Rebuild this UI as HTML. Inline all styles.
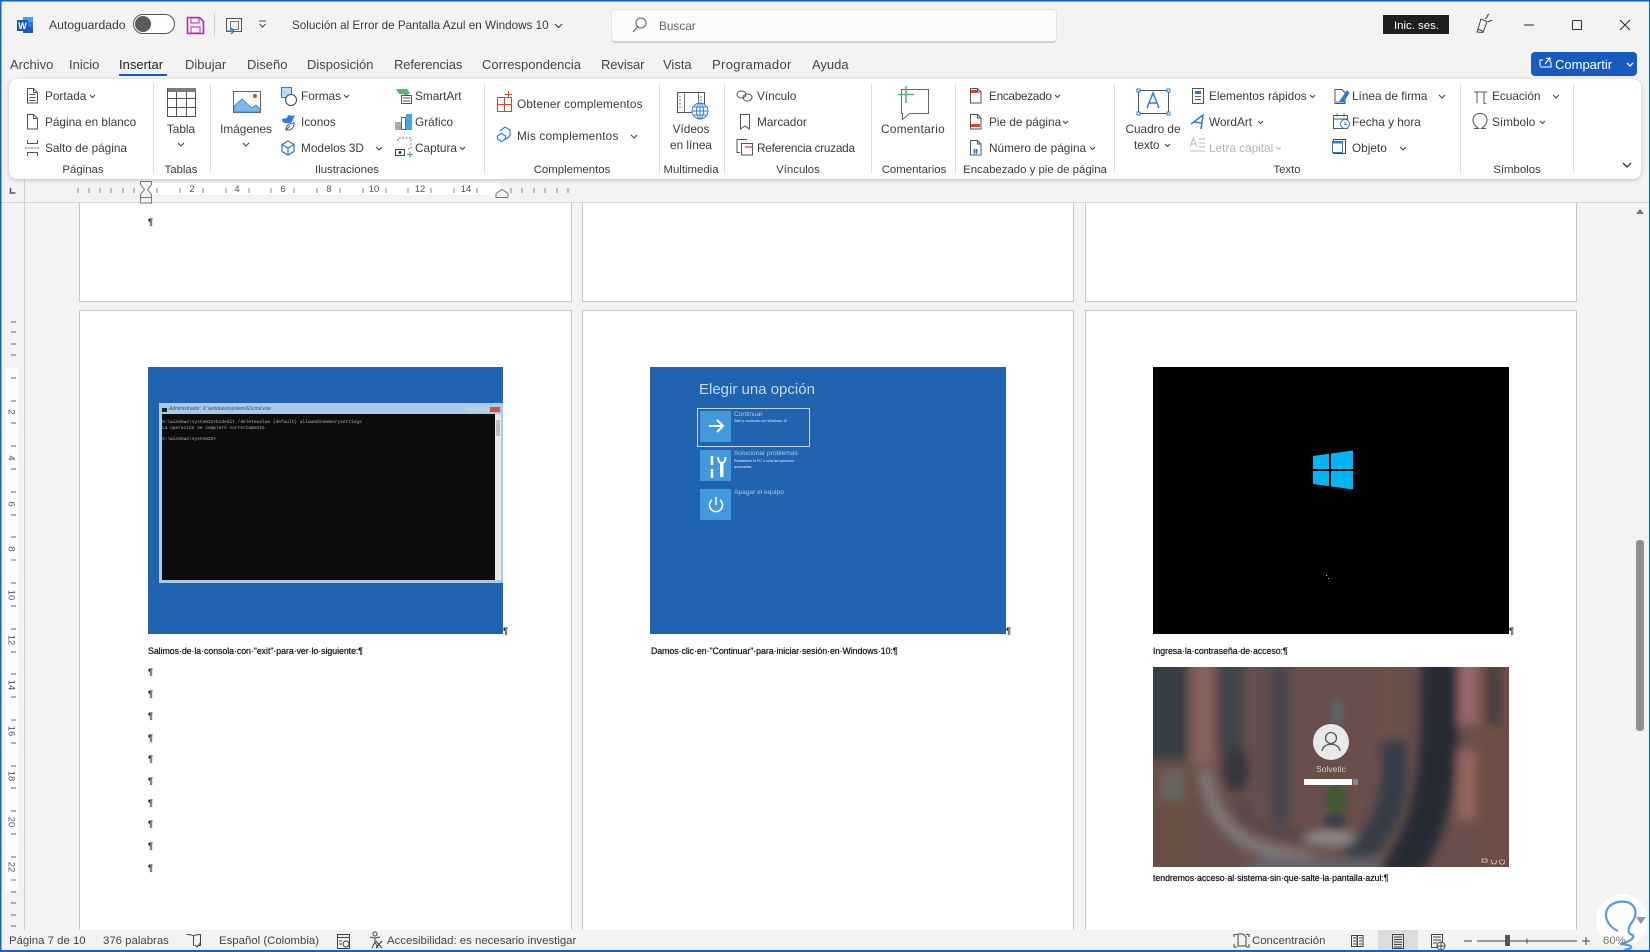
<!DOCTYPE html>
<html lang="es"><head><meta charset="utf-8"><title>Word</title>
<style>
html,body{margin:0;padding:0;width:1650px;height:952px;overflow:hidden;background:#f3f3f3;font-family:"Liberation Sans",sans-serif;color:#333}
.a{position:absolute}
.t{position:absolute;white-space:nowrap;font-size:11.8px;line-height:16px;color:#3b3b3b}
.c{transform:translateX(-50%)}
.tab{position:absolute;top:57px;font-size:13px;line-height:16px;color:#444;white-space:nowrap}
.sb{position:absolute;top:933px;font-size:11.4px;line-height:16px;color:#444;white-space:nowrap}
.page{position:absolute;background:#fff;border:1px solid #c6c6c6;box-sizing:border-box}
.cap{position:absolute;font-size:8.8px;line-height:12px;color:#111;white-space:nowrap;text-shadow:0 0 .6px #333}
.p{position:absolute;left:148px;font-size:9px;font-weight:bold;line-height:10px;color:#222}
.r{position:absolute;font-size:9.5px;line-height:12px;color:#555}
.sep{position:absolute;top:84px;width:1px;height:89px;background:#dcdcdc}
svg{position:absolute;left:0;top:0}
</style></head><body>

<!-- doc area -->
<div class="a" style="left:0;top:203px;width:1650px;height:727px;background:#f3f3f3"></div>
<div class="a" style="left:24px;top:179px;width:1px;height:751px;background:#cfcfcf"></div>
<div class="a" style="left:0;top:202px;width:1650px;height:1px;background:#d6d6d6"></div>
<div class="a" style="left:5px;top:368px;width:13px;height:522px;background:#fff"></div>

<div class="page" style="left:79px;top:203px;width:493px;height:99px;border-top:0"></div>
<div class="page" style="left:582px;top:203px;width:492px;height:99px;border-top:0"></div>
<div class="page" style="left:1085px;top:203px;width:492px;height:99px;border-top:0"></div>
<div class="page" style="left:79px;top:310px;width:493px;height:640px"></div>
<div class="page" style="left:582px;top:310px;width:492px;height:640px"></div>
<div class="page" style="left:1085px;top:310px;width:492px;height:640px"></div>

<!-- image 1 -->
<div class="a" style="left:148px;top:367px;width:355px;height:267px;background:#2063b0"></div>
<div class="a" style="left:159px;top:403px;width:344px;height:180px;background:#a9cbe4"></div>
<div class="a" style="left:162px;top:414px;width:333px;height:166px;background:#0c0c0c"></div>
<div class="a" style="left:495px;top:414px;width:6px;height:166px;background:#e8e8e8"></div>
<div class="a" style="left:496px;top:420px;width:4px;height:16px;background:#bcbcbc"></div>
<div class="a" style="left:466px;top:407px;width:23px;height:5px;background:#b8cfe0"></div>
<div class="a" style="left:490px;top:407px;width:10px;height:5px;background:#c8583c"></div>
<div class="a" style="left:162px;top:408px;width:5px;height:4px;background:#222"></div>
<div class="a" style="left:169px;top:406px;font-size:5px;line-height:7px;color:#445;white-space:nowrap;font-style:italic">Administrador: X:\windows\system32\cmd.exe</div>
<div class="a" style="left:162px;top:420px;font-family:'Liberation Mono',monospace;font-size:4.5px;line-height:5.6px;color:#b5b5b5;white-space:pre">X:\windows\system32>bcdedit /deletevalue {default} allowedinmemorysettings
La operación se completó correctamente.

X:\windows\system32></div>

<!-- image 2 -->
<div class="a" style="left:650px;top:367px;width:356px;height:267px;background:#2063b0"></div>
<div class="a" style="left:699px;top:380px;font-size:15px;line-height:20px;color:#c5d8ec;white-space:nowrap">Elegir una opción</div>
<div class="a" style="left:697px;top:408px;width:111px;height:37px;border:1px solid #c3d6ea"></div>
<div class="a" style="left:700px;top:411px;width:31px;height:31px;background:#4499dc"></div>
<div class="a" style="left:700px;top:450px;width:31px;height:31px;background:#4499dc"></div>
<div class="a" style="left:700px;top:489px;width:31px;height:31px;background:#4499dc"></div>
<div class="a" style="left:734px;top:410px;font-size:6.6px;line-height:9px;color:#a9c9e8;white-space:nowrap">Continuar</div>
<div class="a" style="left:734px;top:419px;font-size:3.6px;line-height:5px;color:#e4eef8;white-space:nowrap">Salir y continuar con Windows 10</div>
<div class="a" style="left:734px;top:449px;font-size:6.6px;line-height:9px;color:#a9c9e8;white-space:nowrap">Solucionar problemas</div>
<div class="a" style="left:734px;top:458px;font-size:3.6px;line-height:6px;color:#e4eef8;white-space:nowrap">Restablece tu PC o mira las opciones<br>avanzadas</div>
<div class="a" style="left:734px;top:488px;font-size:6.6px;line-height:9px;color:#a9c9e8;white-space:nowrap">Apagar el equipo</div>

<!-- image 3 -->
<div class="a" style="left:1153px;top:367px;width:356px;height:267px;background:#000"></div>

<div class="cap" style="left:148px;top:645px;letter-spacing:-.05px">Salimos·de·la·consola·con·"exit"·para·ver·lo·siguiente:¶</div>
<div class="cap" style="left:651px;top:645px;letter-spacing:-.05px">Damos·clic·en·"Continuar"·para·iniciar·sesión·en·Windows·10:¶</div>
<div class="cap" style="left:1153px;top:645px;letter-spacing:-.05px">Ingresa·la·contraseña·de·acceso:¶</div>
<div class="cap" style="left:1153px;top:872px;letter-spacing:-.05px">tendremos·acceso·al·sistema·sin·que·salte·la·pantalla·azul:¶</div>

<div class="p" style="top:217px">¶</div>
<div class="p" style="top:667px">¶</div><div class="p" style="top:689px">¶</div><div class="p" style="top:711px">¶</div>
<div class="p" style="top:733px">¶</div><div class="p" style="top:754px">¶</div><div class="p" style="top:776px">¶</div>
<div class="p" style="top:798px">¶</div><div class="p" style="top:819px">¶</div><div class="p" style="top:841px">¶</div>
<div class="p" style="top:863px">¶</div>
<div class="p" style="left:503px;top:626px">¶</div>
<div class="p" style="left:1006px;top:626px">¶</div>
<div class="p" style="left:1509px;top:626px">¶</div>

<!-- ribbon -->
<div class="a" style="left:9px;top:79px;width:1632px;height:100px;background:#fff;border-radius:8px;box-shadow:0 1px 4px rgba(0,0,0,.22)"></div>
<div class="sep" style="left:153px"></div><div class="sep" style="left:210px"></div><div class="sep" style="left:484px"></div>
<div class="sep" style="left:659px"></div><div class="sep" style="left:724px"></div><div class="sep" style="left:871px"></div>
<div class="sep" style="left:955px"></div><div class="sep" style="left:1114px"></div><div class="sep" style="left:1460px"></div><div class="sep" style="left:1573px"></div>

<!-- ruler -->
<div class="a" style="left:151px;top:183px;width:350px;height:12px;background:#fff"></div>

<!-- titlebar -->
<div class="t" style="left:49px;top:17px;font-size:12.2px">Autoguardado</div>
<div class="t" style="left:292px;top:18px;font-size:11.7px">Solución al Error de Pantalla Azul en Windows 10</div>
<div class="a" style="left:611px;top:9px;width:444px;height:31px;background:#fbfbfb;border:1px solid #e4e4e4;border-bottom:2px solid #d2d2d2;border-radius:4px;box-sizing:content-box"></div>
<div class="t" style="left:659px;top:18px;color:#666">Buscar</div>
<div class="a" style="left:1383px;top:15px;width:66px;height:19px;background:#1f1f1f"></div>
<div class="t" style="left:1394px;top:18px;color:#fff;font-size:11.4px">Inic. ses.</div>

<!-- tabs -->
<div class="tab" style="left:10px">Archivo</div><div class="tab" style="left:69px">Inicio</div>
<div class="tab" style="left:119px;color:#222">Insertar</div><div class="tab" style="left:185px">Dibujar</div>
<div class="tab" style="left:247px">Diseño</div><div class="tab" style="left:307px">Disposición</div>
<div class="tab" style="left:394px;letter-spacing:-.1px">Referencias</div><div class="tab" style="left:482px">Correspondencia</div>
<div class="tab" style="left:601px;letter-spacing:-.1px">Revisar</div><div class="tab" style="left:663px">Vista</div>
<div class="tab" style="left:712px;letter-spacing:.35px">Programador</div><div class="tab" style="left:812px">Ayuda</div>
<div class="a" style="left:119px;top:74px;width:48px;height:2px;background:#185abd"></div>
<div class="a" style="left:1531px;top:52px;width:106px;height:24px;background:#185abd;border-radius:4px"></div>
<div class="t" style="left:1555px;top:57px;color:#fff;font-size:13px">Compartir</div>

<!-- ribbon text -->
<div class="t" style="left:45px;top:88px">Portada</div><div class="t" style="left:45px;top:114px">Página en blanco</div><div class="t" style="left:45px;top:140px">Salto de página</div>
<div class="t c" style="left:181px;top:121px">Tabla</div>
<div class="t c" style="left:246px;top:121px">Imágenes</div>
<div class="t" style="left:301px;top:88px">Formas</div><div class="t" style="left:301px;top:114px">Iconos</div><div class="t" style="left:301px;top:140px">Modelos 3D</div>
<div class="t" style="left:415px;top:88px">SmartArt</div><div class="t" style="left:415px;top:114px">Gráfico</div><div class="t" style="left:415px;top:140px">Captura</div>
<div class="t" style="left:517px;top:96px;letter-spacing:.15px">Obtener complementos</div><div class="t" style="left:517px;top:128px;letter-spacing:.2px">Mis complementos</div>
<div class="t c" style="left:691px;top:121px">Vídeos</div><div class="t c" style="left:691px;top:137px">en línea</div>
<div class="t" style="left:757px;top:88px">Vínculo</div><div class="t" style="left:757px;top:114px">Marcador</div><div class="t" style="left:757px;top:140px;letter-spacing:-.25px">Referencia cruzada</div>
<div class="t c" style="left:913px;top:121px;letter-spacing:.3px">Comentario</div>
<div class="t" style="left:989px;top:88px;letter-spacing:-.3px">Encabezado</div><div class="t" style="left:989px;top:114px">Pie de página</div><div class="t" style="left:989px;top:140px">Número de página</div>
<div class="t c" style="left:1153px;top:121px">Cuadro de</div><div class="t" style="left:1134px;top:137px">texto</div>
<div class="t" style="left:1209px;top:88px">Elementos rápidos</div><div class="t" style="left:1209px;top:114px">WordArt</div><div class="t" style="left:1209px;top:140px;color:#b4b4b4">Letra capital</div>
<div class="t" style="left:1352px;top:88px">Línea de firma</div><div class="t" style="left:1352px;top:114px">Fecha y hora</div><div class="t" style="left:1352px;top:140px">Objeto</div>
<div class="t" style="left:1492px;top:88px">Ecuación</div><div class="t" style="left:1492px;top:114px">Símbolo</div>

<div class="t c" style="left:83px;top:162px;font-size:11.4px">Páginas</div><div class="t c" style="left:181px;top:162px;font-size:11.4px">Tablas</div>
<div class="t c" style="left:347px;top:162px;font-size:11.4px">Ilustraciones</div><div class="t c" style="left:572px;top:162px;font-size:11.4px">Complementos</div>
<div class="t c" style="left:691px;top:162px;font-size:11.4px">Multimedia</div><div class="t c" style="left:798px;top:162px;font-size:11.4px">Vínculos</div>
<div class="t c" style="left:914px;top:162px;font-size:11.4px">Comentarios</div><div class="t c" style="left:1035px;top:162px;font-size:11.4px">Encabezado y pie de página</div>
<div class="t c" style="left:1287px;top:162px;font-size:11.4px">Texto</div><div class="t c" style="left:1517px;top:162px;font-size:11.4px">Símbolos</div>

<!-- ruler numbers -->
<div class="r c" style="left:192px;top:184px">2</div><div class="r c" style="left:237px;top:184px">4</div><div class="r c" style="left:283px;top:184px">6</div><div class="r c" style="left:329px;top:184px">8</div><div class="r c" style="left:374px;top:184px">10</div><div class="r c" style="left:420px;top:184px">12</div><div class="r c" style="left:466px;top:184px">14</div>
<div class="r" style="left:8px;top:406px;transform:rotate(90deg)">2</div><div class="r" style="left:8px;top:452px;transform:rotate(90deg)">4</div><div class="r" style="left:8px;top:498px;transform:rotate(90deg)">6</div><div class="r" style="left:8px;top:543px;transform:rotate(90deg)">8</div>
<div class="r" style="left:5px;top:589px;transform:rotate(90deg)">10</div><div class="r" style="left:5px;top:634px;transform:rotate(90deg)">12</div><div class="r" style="left:5px;top:679px;transform:rotate(90deg)">14</div><div class="r" style="left:5px;top:725px;transform:rotate(90deg)">16</div><div class="r" style="left:5px;top:770px;transform:rotate(90deg)">18</div><div class="r" style="left:5px;top:816px;transform:rotate(90deg)">20</div><div class="r" style="left:5px;top:861px;transform:rotate(90deg)">22</div>

<!-- status -->
<div class="a" style="left:0;top:930px;width:1650px;height:20px;background:#f3f3f3"></div>
<div class="a" style="left:1378px;top:930px;width:40px;height:20px;background:#dcdcdc"></div>
<div class="sb" style="left:9px">Página 7 de 10</div><div class="sb" style="left:103px">376 palabras</div>
<div class="sb" style="left:219px">Español (Colombia)</div><div class="sb" style="left:387px">Accesibilidad: es necesario investigar</div>
<div class="sb" style="left:1252px">Concentración</div>

<!-- login image -->
<svg width="1650" height="952" viewBox="0 0 1650 952" style="pointer-events:none">
<defs>
<clipPath id="lg"><rect x="1153" y="667" width="356" height="200"/></clipPath>
<filter id="b6" x="-30%" y="-30%" width="160%" height="160%"><feGaussianBlur stdDeviation="5"/></filter>
<filter id="b3" x="-30%" y="-30%" width="160%" height="160%"><feGaussianBlur stdDeviation="3"/></filter>
</defs>
<g clip-path="url(#lg)">
<rect x="1153" y="667" width="356" height="200" fill="#6a4e4b"/>
<g filter="url(#b6)">
<rect x="1145" y="655" width="42" height="115" fill="#363c44"/>
<rect x="1145" y="760" width="50" height="120" fill="#6b4f45"/>
<rect x="1162" y="770" width="22" height="30" fill="#666860"/>
<rect x="1192" y="655" width="22" height="110" fill="#86625e"/>
<rect x="1218" y="655" width="26" height="100" fill="#3f444c"/>
<rect x="1254" y="655" width="14" height="150" fill="#5f5052"/>
<rect x="1272" y="655" width="16" height="170" fill="#43464e"/>
<rect x="1376" y="655" width="24" height="120" fill="#6c4f48"/>
<path d="M1440 650 C1440 760 1440 820 1395 880" fill="none" stroke="#262c36" stroke-width="38"/>
<path d="M1392 740 C1400 790 1390 830 1350 860" fill="none" stroke="#363c48" stroke-width="26"/>
<rect x="1458" y="655" width="20" height="70" fill="#96666a"/>
<rect x="1458" y="750" width="18" height="70" fill="#94665f"/>
<rect x="1480" y="655" width="40" height="220" fill="#6d4e45"/>
<rect x="1488" y="665" width="12" height="60" fill="#3c3a41"/>
<ellipse cx="1236" cy="770" rx="13" ry="22" fill="#35363c"/>
<path d="M1205 770 C1215 850 1270 850 1315 860" fill="none" stroke="#7d7673" stroke-width="15"/>
<path d="M1240 800 C1250 845 1300 830 1335 838" fill="none" stroke="#57494a" stroke-width="12"/>
<ellipse cx="1330" cy="838" rx="26" ry="8" fill="#8d8686"/>
<rect x="1250" y="858" width="130" height="18" fill="#66626a"/>
</g>
<g filter="url(#b3)">
<ellipse cx="1336" cy="799" rx="11" ry="14" fill="#3f5a36"/>
<ellipse cx="1335" cy="820" rx="12" ry="7" fill="#3a414d"/>
<ellipse cx="1337" cy="712" rx="6" ry="14" fill="#5f6466"/>
</g>
<circle cx="1331" cy="742" r="18" fill="#e9e9e9"/>
<circle cx="1331" cy="738" r="5.500" fill="none" stroke="#555" stroke-width="1.300"/>
<path d="M1322 751c1-9 17-9 18 0" fill="none" stroke="#555" stroke-width="1.300"/>
<text x="1331" y="772" text-anchor="middle" font-family="Liberation Sans" font-size="8.500" fill="#cfcfcf">Solvetic</text>
<rect x="1304" y="779" width="48" height="6" fill="#fff"/><rect x="1353" y="779" width="5" height="6" fill="#8a8486"/>
<path d="M1482 859h5v3h-5zM1492 860a2.500 2.500 0 1 0 4 0M1502 859v2M1500 860a2.600 2.600 0 1 0 4 0" fill="none" stroke="#ddd" stroke-width=".8"/>
</g>

<!-- image-2 tile glyphs -->
<path d="M709 426h14M717 420l6 6-6 6" fill="none" stroke="#fff" stroke-width="2"/>
<path d="M712 456v9M712 469v9" stroke="#fff" stroke-width="2.500" fill="none"/><path d="M718 457c0 5 3 6 3 6v13h1.500V463s3-1 3-6" stroke="#fff" stroke-width="2" fill="none"/>
<path d="M712 500a6.500 6.500 0 1 0 8 0M716 497v8" fill="none" stroke="#fff" stroke-width="1.500"/>
<!-- windows logo -->
<path d="M1313 456l16-2.200v15.200h-16zM1331 453.500l22-3v18.500h-22zM1313 471h16v15.300l-16-2.300zM1331 471h22v18.500l-22-3z" fill="#00b5f0"/>
<path d="M1326 575h1v1h-1zM1328 578h1v1h-1z" fill="#bbb"/>

<!-- top ruler ticks -->
<path d="M78 188v5M89 188v5M100 188v5M111 188v5M123 188v5M134 188v5M157 188v5M180 188v5M203 188v5M226 188v5M249 188v5M271 188v5M294 188v5M317 188v5M340 188v5M363 188v5M386 188v5M408 188v5M431 188v5M454 188v5M477 188v5M511 188v5M522 188v5M534 188v5M545 188v5M557 188v5M568 188v5" stroke="#8a8a8a" stroke-width="1"/>
<path d="M140.500 181.500h11v3l-4 5 4 5v3h-11v-3l4-5-4-5z" fill="#f3f3f3" stroke="#777"/><path d="M140.500 197.500h11v5.500h-11z" fill="#f3f3f3" stroke="#777"/>
<path d="M496 197.500v-4l6-4 6 4v4z" fill="#f3f3f3" stroke="#777"/>
<path d="M10.500 188v5h5" fill="none" stroke="#555" stroke-width="1.500"/>
<!-- left ruler ticks -->
<path d="M11 322h5M11 332h5M11 344h5M11 355h5M11 378h5M11 401h5M11 423h5M11 446h5M11 469h5M11 492h5M11 515h5M11 537h5M11 560h5M11 583h5M11 606h5M11 629h5M11 652h5M11 674h5M11 697h5M11 720h5M11 743h5M11 766h5M11 788h5M11 811h5M11 834h5M11 857h5M11 880h5M11 892h5M11 903h5M11 915h5M11 926h5" stroke="#666" stroke-width="1"/>

<!-- scrollbar -->
<rect x="1636" y="540" width="8" height="191" rx="3" fill="#8f8f8f"/>
<path d="M1636 214l4-5 4 5z" fill="#777"/><path d="M1636 919l4 5 4-5z" fill="#777"/>

<!-- titlebar icons -->
<rect x="23" y="17" width="10" height="16" fill="#103f91"/><rect x="23" y="17" width="10" height="5" fill="#41a5ee"/><rect x="23" y="22" width="10" height="5" fill="#2b7cd3"/><rect x="23" y="27" width="10" height="6" fill="#185abd"/>
<rect x="17" y="20" width="11" height="11" fill="#185abd"/><text x="22.500" y="29" text-anchor="middle" font-family="Liberation Sans" font-weight="bold" font-size="9" fill="#fff">W</text>
<rect x="133.500" y="14.500" width="41" height="19" rx="9.500" fill="#fff" stroke="#555"/><circle cx="143" cy="24" r="8" fill="#5a5a5a"/>
<path d="M187.500 17.500h12l4 4v12h-16z" fill="#f6e6f6" stroke="#a5399f" stroke-width="1.600"/><rect x="191" y="18" width="8" height="5" fill="#f3f3f3" stroke="#a5399f"/><rect x="191" y="27" width="9" height="6" fill="#f3f3f3" stroke="#a5399f"/>
<rect x="214" y="13" width="1" height="23" fill="#cfcfcf"/>
<rect x="226.500" y="18.500" width="15" height="13" fill="none" stroke="#555"/><rect x="230.500" y="21.500" width="8" height="8" fill="none" stroke="#777"/><path d="M227 31h7M231 28l3 3-3 3" fill="none" stroke="#2b7cd3" stroke-width="1.300"/>
<path d="M259 21h7M259.500 24l3 3 3-3" fill="none" stroke="#444"/>
<path d="M555 24l3.500 3.500L562 24" fill="none" stroke="#444" stroke-width="1.200"/>
<circle cx="641" cy="23" r="5" fill="none" stroke="#666" stroke-width="1.100"/><path d="M637.500 27l-4.500 5" stroke="#666" stroke-width="1.200"/>
<path d="M1477 32l4-13 6 2.500-4 11zM1485 19l3-3M1488 22l4-2M1487 16l2-2" fill="none" stroke="#444"/><path d="M1477.500 29l6 2.500" stroke="#444"/>
<path d="M1524 25h10" stroke="#333" stroke-width="1.100"/><rect x="1572.500" y="20.500" width="9" height="9" rx="1" fill="none" stroke="#333" stroke-width="1.100"/><path d="M1620 20l10 10M1630 20l-10 10" stroke="#333" stroke-width="1.100"/>
<path d="M1540 66v-6h3M1551 62v5h-11M1545 64l4-5M1546 58.500l4-.5v4" fill="none" stroke="#fff" stroke-width="1.100"/><path d="M1627 63l3 3 3-3" fill="none" stroke="#fff" stroke-width="1.300"/>

<!-- chevrons -->
<path d="M90 95l2.500 2.500L95 95M178 143l3 3 3-3M243 143l3 3 3-3M344 95l2.500 2.500L349 95M376 147l3 3 3-3M460 147l2.500 2.500L465 147M631 135l3 3 3-3M1055 95l2.500 2.500L1060 95M1063 121l2.500 2.500L1068 121M1090 147l2.500 2.500L1095 147M1165 144l2.500 2.500L1170 144M1310 95l2.500 2.500L1315 95M1258 121l2.500 2.500L1263 121M1439 95l3 3 3-3M1400 147l3 3 3-3M1553 95l3 3 3-3M1540 121l2.500 2.500L1545 121" fill="none" stroke="#444" stroke-width="1.100"/>
<path d="M1276 147l2.500 2.500L1281 147" fill="none" stroke="#bbb" stroke-width="1.100"/>
<path d="M1623 163l4 4 4-4" fill="none" stroke="#333" stroke-width="1.300"/>

<!-- Paginas icons -->
<g fill="none" stroke="#555" stroke-width="1">
<path d="M27.500 88.500h6l4 4v10.500h-10zM33.500 88.500v4h4M29.500 94.500h6M29.500 97.500h6M29.500 100.500h6"/>
<path d="M27.500 114.500h6l4 4v10.500h-10zM33.500 114.500v4h4"/>
<path d="M27.500 140v3.500h10V140M27.500 156v-3.500h10v3.500"/>
<rect x="167.500" y="88.500" width="28" height="28"/><path d="M167.500 98.500h28M167.500 107.500h28M176.500 92v24.500M186.500 92v24.500"/>
<rect x="233.500" y="91.500" width="27" height="21" stroke="#666"/>
</g>
<path d="M25 148h14" stroke="#2b7cd3" stroke-dasharray="2 1"/>
<rect x="168" y="88" width="28" height="4" fill="#7a7a7a"/>
<path d="M234 112v-6l8-7 10 9 4-3 4 4v3z" fill="#7ab9e8" stroke="#2b7cd3" stroke-width=".8"/><circle cx="255" cy="96" r="2" fill="#d24726"/>
<rect x="281.500" y="87.500" width="10" height="10" fill="#bcdcf4" stroke="#2b7cd3"/><circle cx="291" cy="100" r="5.500" fill="#fff" stroke="#444"/>
<path d="M282 119l5-1 1-3 4 1 3-1-2 4c0 3-3 5-7 4-3 0-4-2-4-4z" fill="#2b7cd3"/><path d="M286 130c0-4 3-7 8-7 0 5-3 7-6 7zM286 130l4-4" fill="#fff" stroke="#555"/>
<path d="M288 141l6 3.500v7l-6 3.500-6-3.500v-7zM282 144.500l6 3.500 6-3.500M288 148v7" fill="none" stroke="#2b7cd3" stroke-width="1.200"/>
<path d="M396 89h11l3 4-3 3h-4l1-2h-5z" fill="#5cb377"/><rect x="401.500" y="95.500" width="10" height="8" fill="#fff" stroke="#555"/><path d="M403 98h7M403 101h7" stroke="#555"/>
<rect x="395" y="122" width="6" height="8" fill="#aaa"/><rect x="401.500" y="117.500" width="4" height="12" fill="#fff" stroke="#666"/><rect x="406" y="114" width="6" height="16" fill="#41a5ee"/>
<path d="M398 141v-3h13v11h-3" fill="none" stroke="#777" stroke-dasharray="2 1.500"/><rect x="395.500" y="149.500" width="9" height="6" fill="#fff" stroke="#444"/><circle cx="400" cy="152.500" r="1.500" fill="#444"/><path d="M407 154.500h6M410 151.500v6" stroke="#3aa65a"/>
<path d="M497.500 101.500h14v14h-14zM504.500 101.500v14M497.500 108.500h14M505 98.500h7M508.500 95v7" fill="none" stroke="#d24726" transform="translate(0 -4)"/>
<path d="M505 127l5 3v6M497.500 136v3l4 2.500 4-2.500v-3l-4-2.500zM500 131l5-4M510 136l-4 3" fill="none" stroke="#2b7cd3" stroke-width="1.200"/>

<!-- Videos -->
<rect x="677.500" y="92.500" width="27" height="20" fill="#fff" stroke="#555"/><path d="M680 96v14M701 96v10" stroke="#555" stroke-dasharray="1.500 2"/><path d="M684.500 93v19M698.500 93v12" stroke="#777"/>
<circle cx="700" cy="111" r="8" fill="#fff" stroke="#2b7cd3"/><path d="M692 111h16M700 103v16M694 107h12M694 115h12" stroke="#2b7cd3" fill="none"/><ellipse cx="700" cy="111" rx="3.500" ry="8" fill="none" stroke="#2b7cd3"/>
<!-- Vinculos -->
<g fill="none" stroke="#555">
<ellipse cx="741.500" cy="94.500" rx="4.500" ry="3.500"/><ellipse cx="747.500" cy="97.500" rx="4.500" ry="3.500"/>
<path d="M740.500 114.500h9v14.500l-4.500-3-4.500 3z"/>
<path d="M747 139.500h-10v13h3M741.500 143.500h11v11.500h-11z"/>
<path d="M970.500 88.500h7l3.500 3.500v11h-10.500zM977.500 88.500v3.500h3.500"/>
<path d="M970.500 114.500h7l3.500 3.500v11h-10.500zM977.500 114.500v3.500h3.500"/>
<path d="M970.500 140.500h7l3.500 3.500v11h-10.500zM977.500 140.500v3.500h3.500"/>
<path d="M901.500 89.500h27v24h-19l-7 6v-6h-1z" stroke="#666"/>
<rect x="1192.500" y="88.500" width="11" height="15"/>
<rect x="1138.500" y="90.500" width="30" height="23"/>
<rect x="1333.500" y="115.500" width="14" height="13"/><path d="M1333.500 119h14M1337 113.500v3M1344 113.500v3"/>
<path d="M1474 92h13M1477 92v11M1484 92v11c0 1 1 1 2 0"/>
<path d="M1474 128.500h4.500c-3-2-5.500-5-5.500-8.500 0-4 3-6.500 7-6.500s7 2.500 7 6.500c0 3.500-2.500 6.500-5.500 8.500h4.500"/>
<path d="M1335 103.500v-14h7l3 3v11z"/>
</g>
<path d="M745 147h7" stroke="#d24726" stroke-width="1.200"/>
<rect x="971" y="90" width="6" height="3" fill="#d24726"/><rect x="971" y="124" width="9" height="3" fill="#d24726"/><path d="M973 150h5M973 152h5M974.500 149v5M976.500 149v5" stroke="#2b7cd3"/>
<path d="M898 94.500h16M906 86v17" stroke="#5cb377" stroke-width="1.500"/>
<g fill="#fff" stroke="#2b7cd3"><rect x="1137" y="89" width="3" height="3"/><rect x="1167" y="89" width="3" height="3"/><rect x="1137" y="112" width="3" height="3"/><rect x="1167" y="112" width="3" height="3"/></g>
<path d="M1147 108l6-15 6 15M1149 103h8" fill="none" stroke="#2b7cd3" stroke-width="1.500"/>
<rect x="1195" y="91" width="6" height="3" fill="#2b7cd3"/><path d="M1195 96.500h6M1195 99.500h6" stroke="#666"/>
<path d="M1191 124l12-9-2 14M1194 122l8 1" fill="none" stroke="#2b7cd3" stroke-width="1.500"/>
<path d="M1190 147l3.500-9 3.500 9M1191 144h5M1199 139h6M1199 143h6M1199 147h6M1190 151h15" fill="none" stroke="#bbb"/>
<path d="M1340 101l7-10 2 2-6 9zM1336 102h10" fill="#2b7cd3" stroke="#2b7cd3"/>
<circle cx="1345" cy="124" r="4.500" fill="#fff" stroke="#2b7cd3"/><path d="M1345 122v2.500h2" fill="none" stroke="#2b7cd3"/>
<rect x="1333.500" y="139.500" width="12" height="14" fill="none" stroke="#444"/><rect x="1332.500" y="141.500" width="10" height="11" fill="#fff" stroke="#2b7cd3"/><rect x="1332.500" y="141.500" width="10" height="2" fill="#2b7cd3"/>

<!-- status icons -->
<g fill="none" stroke="#444">
<path d="M186.500 934.500c3 0 5 0 7 1.500 2-1.500 4-1.500 7-1.500v11h-3M193.500 936v10"/><path d="M195 945l2 2 4-5" stroke="#444"/>
<rect x="337.500" y="934.500" width="12" height="14"/><path d="M337.500 937.500h12M339 941h3M339 944h3"/><circle cx="346" cy="944" r="3" fill="#f3f3f3"/>
<circle cx="375" cy="934" r="2"/><path d="M370 937l5 1 5-1M375 938v4l-3 6M375 942l3 6"/><path d="M376 941l6 7M382 941l-6 7" stroke="#333"/>
<path d="M1234 937v-2.500h3M1246 934.500h3v2.500M1234 944v3h3M1246 947h3v-3M1238 946v-12h5l3 3v9z"/>
<path d="M1351.500 935.500h5.500v11h-5.500zM1357.500 935.500h5.500v11h-5.500zM1353 938h3M1353 941h3M1353 944h3M1359 938h3M1359 941h3M1359 944h3"/>
<rect x="1392.500" y="934.500" width="11" height="14"/><path d="M1394 937h8M1394 939.500h8M1394 942h8M1394 944.500h8M1394 947h8"/>
<rect x="1431.500" y="934.500" width="11" height="13"/><path d="M1433 937h8M1433 940h8M1433 943h4"/><circle cx="1441" cy="946" r="4" fill="#f3f3f3"/><path d="M1437 946h8M1441 942v8"/>
</g>
<path d="M1464 941h8M1582 941h8M1586 937v8M1477 941h100M1527 938.500v5" stroke="#444" fill="none"/>
<rect x="1505" y="935" width="5" height="11" fill="#555"/>

<!-- solvetic badge -->
<circle cx="1622" cy="920" r="26" fill="#fff" fill-opacity=".85"/>
<path d="M1618 931C1604 925 1600 906 1618 902C1634 899 1640 912 1632 922C1628 928 1628 932 1630 934C1638 936 1630 942 1620 944C1632 945 1636 948 1624 950" fill="none" stroke="#5b9bd5" stroke-width="2.200"/>
<path d="M1636 917h10l-5 7z" fill="#9a9a9a"/>

<!-- window frame -->
<rect x="0" y="0" width="1650" height="1.500" fill="#1a5fc4"/><rect x="0" y="0" width="1.500" height="952" fill="#1a5fc4"/><rect x="1649" y="0" width="1" height="952" fill="#1a5fc4"/><rect x="0" y="950" width="1650" height="2" fill="#1a5fc4"/>
</svg>
<div class="sb" style="left:1603px;color:#777">60%</div>
</body></html>
